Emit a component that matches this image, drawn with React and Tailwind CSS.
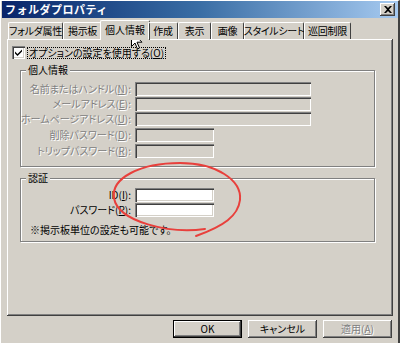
import React from 'react';

const raised = 'shadow-[inset_-1px_-1px_#404040,inset_1px_1px_#ffffff,inset_-2px_-2px_#808080]';
const sunken = 'shadow-[inset_1px_1px_#808080,inset_2px_2px_#404040,inset_-1px_-1px_#ffffff,inset_-2px_-2px_#d4d0c8]';
const jp = "font-['MS_UI_Gothic','Noto_Sans_CJK_JP',sans-serif] [font-feature-settings:'palt'] leading-none";

const tabs = [
    { label: 'フォルダ属性', w: 'w-[55px]' },
    { label: '掲示板', w: 'w-[39px]' },
    { label: '個人情報', w: 'w-[50px]', active: true },
    { label: '作成', w: 'w-[30px]' },
    { label: '表示', w: 'w-[33px]' },
    { label: '画像', w: 'w-[33px]' },
    { label: 'スタイルシート', w: 'w-[60px]' },
    { label: '巡回制限', w: 'w-[47px]' },
];

// 無効状態の文字（浮き出し）
const Dim = ({ children }) => (
    <span className="text-[#808080] [text-shadow:1px_1px_0_#ffffff]">{children}</span>
);

const Row = ({ label, k, width, disabled, mt = '' }) => (
    <div className={`flex items-center h-[14px] ${mt}`}>
        <div className="w-[114px] text-right pr-[4px] text-[10px] whitespace-nowrap">
            {disabled ? (
                <Dim>{label}(<u>{k}</u>):</Dim>
            ) : (
                <span>{label}(<u>{k}</u>):</span>
            )}
        </div>
        <div className={`${width} h-[14px] ${sunken} ${disabled ? 'bg-[#d4d0c8]' : 'bg-white'}`} />
    </div>
);

const Group = ({ title, className, children }) => (
    <div className={`relative ml-[8px] w-[355px] border border-[#808080] shadow-[inset_1px_1px_#ffffff,1px_1px_#ffffff] ${className}`}>
        <div className="absolute -top-[6px] left-[5px] px-[2px] bg-[#d4d0c8] text-[10px]">{title}</div>
        {children}
    </div>
);

export default function App() {
    return (
        <div className={`relative w-[400px] h-[343px] overflow-hidden bg-[#d4d0c8] text-black ${jp}`}>
            <div className="absolute inset-0 border-l border-t border-white border-r-2 border-r-[#404040] pointer-events-none" />

            {/* タイトルバー */}
            <div className="mx-[2px] mt-[1px] h-[17px] flex items-center justify-between pl-[3px] pr-[3px] bg-gradient-to-r from-[#0a246a] via-[#3a6ea5] to-[#a6caf0]">
                <span className="text-white font-bold text-[11px] tracking-[0.5px] [font-feature-settings:normal]">フォルダプロパティ</span>
                <div className={`w-[15px] h-[13px] bg-[#d4d0c8] ${raised} flex items-center justify-center`}>
                    <svg width="8" height="7" viewBox="0 0 8 7">
                        <path d="M0 0h2l2 2 2-2h2L5 3.5 8 7H6L4 5 2 7H0l3-3.5z" fill="#000" />
                    </svg>
                </div>
            </div>

            {/* タブ */}
            <div className="flex items-end ml-[8px] mt-[2px] h-[19px] relative z-10">
                {tabs.map((t) =>
                    t.active ? (
                        <div
                            key={t.label}
                            className={`${t.w} -mx-[2px] h-[20px] -mb-[1px] bg-[#d4d0c8] border-t border-l border-white border-r border-r-[#404040] rounded-t-[2px] flex items-center justify-center whitespace-nowrap text-[10px] pb-[2px]`}
                        >
                            {t.label}
                        </div>
                    ) : (
                        <div
                            key={t.label}
                            className={`${t.w} h-[17px] border-t border-l border-white border-r border-r-[#404040] rounded-t-[2px] flex items-center justify-center whitespace-nowrap tracking-[-0.3px] text-[10px]`}
                        >
                            {t.label}
                        </div>
                    )
                )}
            </div>

            {/* パネル */}
            <div className={`ml-[7px] w-[386px] h-[277px] pt-[7px] pl-[5px] ${raised}`}>
                <div className="flex items-center h-[13px]">
                    <div className={`w-[13px] h-[13px] bg-white ${sunken} flex items-center justify-center`}>
                        <svg width="7" height="7" viewBox="0 0 7 7">
                            <path d="M0 2.5l2.5 2.5L7 0.5V2.5L2.5 7L0 4.5z" fill="#000" />
                        </svg>
                    </div>
                    <span className="ml-[3px] px-[1px] text-[10px] outline outline-1 outline-dotted outline-black">
                        オプションの設定を使用する(<u>O</u>)
                    </span>
                </div>

                <Group title="個人情報" className="mt-[11px] h-[97px] pt-[11px]">
                    <Row label="名前またはハンドル" k="N" width="w-[176px]" disabled />
                    <Row label="メールアドレス" k="E" width="w-[176px]" disabled mt="mt-[1px]" />
                    <Row label="ホームページアドレス" k="U" width="w-[176px]" disabled mt="mt-[1px]" />
                    <Row label="削除パスワード" k="D" width="w-[79px]" disabled mt="mt-[2px]" />
                    <Row label="トリップパスワード" k="R" width="w-[79px]" disabled mt="mt-[2px]" />
                </Group>

                <Group title="認証" className="mt-[11px] h-[64px] pt-[9px]">
                    <Row label="ID" k="I" width="w-[79px]" />
                    <Row label="パスワード" k="P" width="w-[79px]" mt="mt-[1px]" />
                    <div className="mt-[8px] ml-[9px] text-[10px]">※掲示板単位の設定も可能です。</div>
                </Group>
            </div>

            {/* ボタン */}
            <div className="flex justify-end gap-[6px] mt-[4px] mr-[8px]">
                <div className={`w-[69px] h-[18px] border border-black flex items-center justify-center text-[10px] bg-[#d4d0c8] ${raised}`}>
                    OK
                </div>
                <div className={`w-[69px] h-[18px] flex items-center justify-center text-[10px] ${raised}`}>
                    キャンセル
                </div>
                <div className={`w-[69px] h-[18px] flex items-center justify-center text-[10px] ${raised}`}>
                    <Dim>適用(<u>A</u>)</Dim>
                </div>
            </div>

            {/* 赤い丸（手書き） */}
            <svg className="absolute left-0 top-0 pointer-events-none" width="400" height="343">
                <path
                    d="M205 229 C170 234 118 222 114 198 C111 178 140 163 180 163 C216 163 242 180 240 200 C238 216 224 226 196 236"
                    fill="none"
                    stroke="#e8403c"
                    strokeWidth="2"
                    strokeLinecap="round"
                />
            </svg>

            {/* マウスカーソル */}
            <svg className="absolute left-[131px] top-[31px] pointer-events-none" width="12" height="19" viewBox="0 0 12 19">
                <path
                    d="M0.5 0.5 V15.5 L4 12 L6.5 18 L8.5 17 L6 11.2 H11 Z"
                    fill="#fff"
                    stroke="#000"
                    strokeWidth="1"
                    strokeLinejoin="miter"
                />
            </svg>
        </div>
    );
}
